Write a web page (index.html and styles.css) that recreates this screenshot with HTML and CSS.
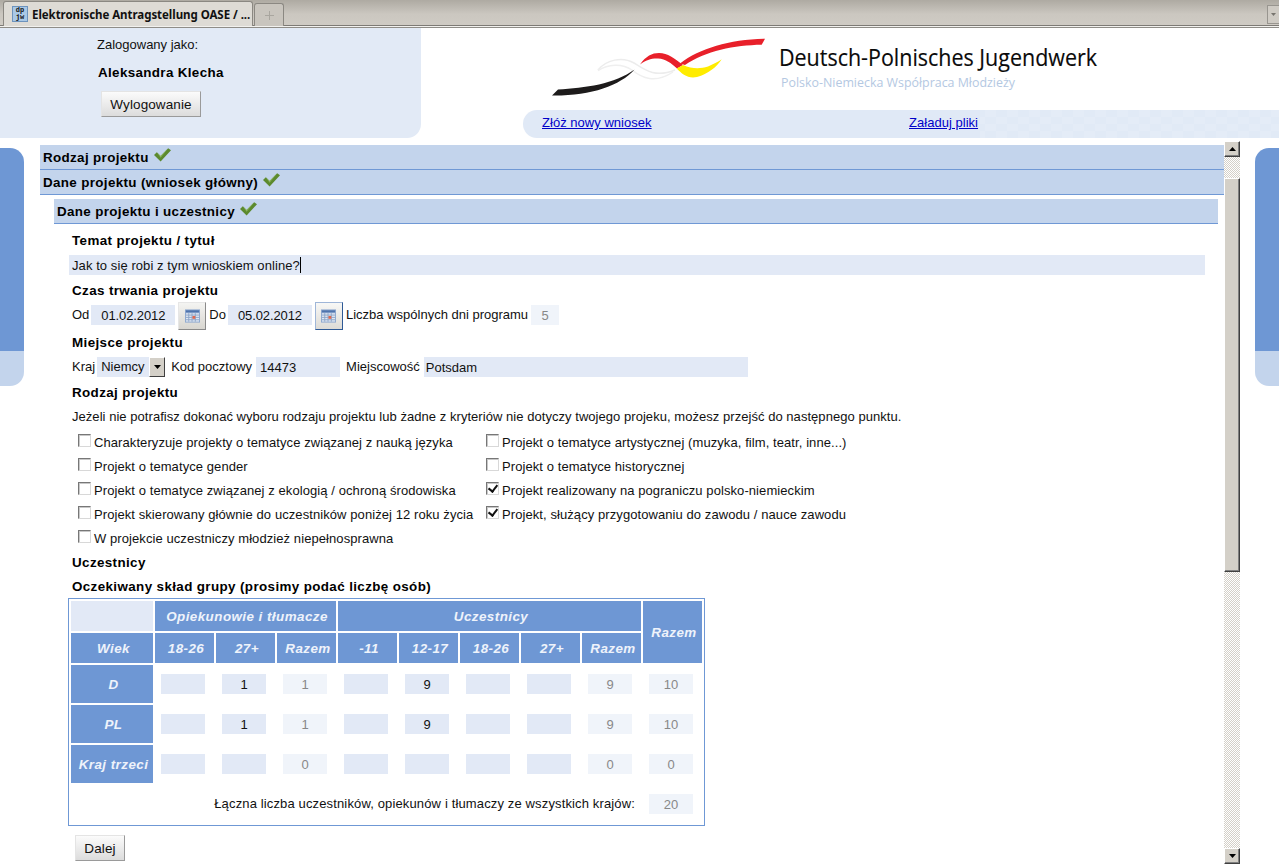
FILE: index.html
```html
<!DOCTYPE html>
<html lang="pl">
<head>
<meta charset="utf-8">
<title>Elektronische Antragstellung OASE</title>
<link rel="stylesheet" href="styles.css">
</head>
<body>
<div class="chrome">
  <div class="tab">
    <span class="favicon">dp<br>jw</span>
    <span class="tab-title">Elektronische Antragstellung OASE / ...</span>
  </div>
  <div class="tab-new">
    <svg width="9" height="9" viewBox="0 0 9 9"><path d="M4 0h1v4h4v1H5v4H4V5H0V4h4z" fill="#a9a69f"/></svg>
  </div>
  <div class="tab-menu">
    <svg width="5" height="3" viewBox="0 0 5 3"><path d="M0 0h5L2.500 3z" fill="#77746e"/></svg>
  </div>
</div>

<header class="top">
  <div class="user">
    <div class="user-label">Zalogowany jako:</div>
    <div class="user-name">Aleksandra Klecha</div>
    <button class="btn btn-logout">Wylogowanie</button>
  </div>
  <div class="brand">
    <svg class="logo" width="858" height="82" viewBox="421 28 858 82">
      <path d="M598 70C606 60 622 56 634 63C645 70 655 78 675 70" fill="none" stroke="#ececec" stroke-width="1.500"/>
      <path d="M598 70.500C608 64 622 63 632 70C642 78 655 84 673 72" fill="none" stroke="#efefef" stroke-width="1.500"/>
      <path d="M552 95.500L558 89.500C585 88 615 84 634.500 69.500C620 86 590 96 552 95.500Z" fill="#1d1b1b"/>
      <path d="M765 38.700L761.700 44.700C735 45 705 51 685 65L680 63.500C700 48 730 39.500 765 38.700Z" fill="#e8202a"/>
      <path d="M640 64.500C646 56 652 53 659 53C668 53 674 58 683 65L677 68.500C671 63 666 59 658 58.500C651 58.300 646 60 640 64.500Z" fill="#e8202a"/>
      <path d="M676.700 68.500L683 65C692 69 700 69 708 66.500C713 64.500 718 62 721.700 59.300C717 67 708 74 697 77C688 79 682 74 676.700 68.500Z" fill="#ffec00"/>
      <text class="logo-title" x="779" y="65.500" textLength="318" lengthAdjust="spacingAndGlyphs">Deutsch-Polnisches Jugendwerk</text>
      <text class="logo-sub" x="781" y="87" textLength="234" lengthAdjust="spacingAndGlyphs">Polsko-Niemiecka Współpraca Młodzieży</text>
    </svg>
    <nav class="nav">
      <a class="nav-link" href="#">Złóż nowy wniosek</a>
      <a class="nav-link" href="#">Załaduj pliki</a>
    </nav>
  </div>
</header>

<div class="main">
  <div class="side side-left"></div>
  <div class="viewport">
    <div class="page">
      <div class="bar"><b>Rodzaj projektu</b>
        <svg class="ok" width="17" height="15" viewBox="0 0 18 15"><path d="M0 8l3-3 4 4 8-8 3 2L7 15z" fill="#5c8a2e"/><path d="M3 5l4 4 8-8-8 10z" fill="#8ab45c"/></svg>
      </div>
      <div class="bar"><b>Dane projektu (wniosek główny)</b>
        <svg class="ok" width="17" height="15" viewBox="0 0 18 15"><path d="M0 8l3-3 4 4 8-8 3 2L7 15z" fill="#5c8a2e"/><path d="M3 5l4 4 8-8-8 10z" fill="#8ab45c"/></svg>
      </div>
      <div class="bar bar-sub"><b>Dane projektu i uczestnicy</b>
        <svg class="ok" width="17" height="15" viewBox="0 0 18 15"><path d="M0 8l3-3 4 4 8-8 3 2L7 15z" fill="#5c8a2e"/><path d="M3 5l4 4 8-8-8 10z" fill="#8ab45c"/></svg>
      </div>

      <form class="form">
        <div class="heading">Temat projektu / tytuł</div>
        <div class="row row-title"><div class="field field-title">Jak to się robi z tym wnioskiem online?<span class="caret"></span></div></div>

        <div class="heading">Czas trwania projektu</div>
        <div class="row row-dates">
          <span class="lbl">Od</span>
          <input class="field field-date" value="01.02.2012">
          <span class="cal"><svg width="15" height="14" viewBox="0 0 16 14"><rect width="16" height="14" fill="#8da7cf"/><rect x="1" y="1" width="14" height="2" fill="#4f74ad"/><path d="M1 4h14v9H1z" fill="#dfe7f3"/><path d="M1 6h14M1 8.500h14M1 11h14M4 4v9M7.500 4v9M11 4v9" stroke="#8ea5c8" stroke-width="1"/><rect x="8" y="7" width="3" height="3" fill="#e0684f"/></svg></span>
          <span class="lbl">Do</span>
          <input class="field field-date" value="05.02.2012">
          <span class="cal cal-hover"><svg width="15" height="14" viewBox="0 0 16 14"><rect width="16" height="14" fill="#8da7cf"/><rect x="1" y="1" width="14" height="2" fill="#4f74ad"/><path d="M1 4h14v9H1z" fill="#dfe7f3"/><path d="M1 6h14M1 8.500h14M1 11h14M4 4v9M7.500 4v9M11 4v9" stroke="#8ea5c8" stroke-width="1"/><rect x="8" y="7" width="3" height="3" fill="#e0684f"/></svg></span>
          <span class="lbl">Liczba wspólnych dni programu</span>
          <input class="field field-days field-off" value="5">
        </div>

        <div class="heading">Miejsce projektu</div>
        <div class="row row-place">
          <span class="lbl">Kraj</span>
          <div class="select"><span class="select-value">Niemcy</span><span class="select-arrow"><svg width="7" height="4" viewBox="0 0 7 4"><path d="M0 0h7L3.500 4z" fill="#000"/></svg></span></div>
          <span class="lbl lbl-kod">Kod pocztowy</span>
          <input class="field field-zip" value="14473">
          <span class="lbl lbl-city">Miejscowość</span>
          <input class="field field-city" value="Potsdam">
        </div>

        <div class="heading">Rodzaj projektu</div>
        <div class="line">Jeżeli nie potrafisz dokonać wyboru rodzaju projektu lub żadne z kryteriów nie dotyczy twojego projeku, możesz przejść do następnego punktu.</div>

        <div class="checks">
          <label class="check"><input type="checkbox" class="box">Charakteryzuje projekty o tematyce związanej z nauką języka</label>
          <label class="check"><input type="checkbox" class="box">Projekt o tematyce artystycznej (muzyka, film, teatr, inne...)</label>
          <label class="check"><input type="checkbox" class="box">Projekt o tematyce gender</label>
          <label class="check"><input type="checkbox" class="box">Projekt o tematyce historycznej</label>
          <label class="check"><input type="checkbox" class="box">Projekt o tematyce związanej z ekologią / ochroną środowiska</label>
          <label class="check"><input type="checkbox" class="box" checked>Projekt realizowany na pograniczu polsko-niemieckim</label>
          <label class="check"><input type="checkbox" class="box">Projekt skierowany głównie do uczestników poniżej 12 roku życia</label>
          <label class="check"><input type="checkbox" class="box" checked>Projekt, służący przygotowaniu do zawodu / nauce zawodu</label>
          <label class="check"><input type="checkbox" class="box">W projekcie uczestniczy młodzież niepełnosprawna</label>
        </div>

        <div class="heading">Uczestnicy</div>
        <div class="heading">Oczekiwany skład grupy (prosimy podać liczbę osób)</div>

        <table class="grid">
          <colgroup><col class="c-first"><col class="c"><col class="c"><col class="c"><col class="c"><col class="c"><col class="c"><col class="c"><col class="c"><col class="c"></colgroup>
          <tr class="r-head">
            <th class="blank"></th>
            <th colspan="3">Opiekunowie i tłumacze</th>
            <th colspan="5">Uczestnicy</th>
            <th rowspan="2">Razem</th>
          </tr>
          <tr class="r-head">
            <th>Wiek</th><th>18-26</th><th>27+</th><th>Razem</th><th>-11</th><th>12-17</th><th>18-26</th><th>27+</th><th>Razem</th>
          </tr>
          <tr class="r-body">
            <th>D</th>
            <td><input class="cell"></td><td><input class="cell" value="1"></td><td><input class="cell off" value="1"></td>
            <td><input class="cell"></td><td><input class="cell" value="9"></td><td><input class="cell"></td><td><input class="cell"></td><td><input class="cell off" value="9"></td><td><input class="cell off" value="10"></td>
          </tr>
          <tr class="r-body">
            <th>PL</th>
            <td><input class="cell"></td><td><input class="cell" value="1"></td><td><input class="cell off" value="1"></td>
            <td><input class="cell"></td><td><input class="cell" value="9"></td><td><input class="cell"></td><td><input class="cell"></td><td><input class="cell off" value="9"></td><td><input class="cell off" value="10"></td>
          </tr>
          <tr class="r-body">
            <th>Kraj trzeci</th>
            <td><input class="cell"></td><td><input class="cell"></td><td><input class="cell off" value="0"></td>
            <td><input class="cell"></td><td><input class="cell"></td><td><input class="cell"></td><td><input class="cell"></td><td><input class="cell off" value="0"></td><td><input class="cell off" value="0"></td>
          </tr>
          <tr class="r-body">
            <td colspan="9" class="total-label">Łączna liczba uczestników, opiekunów i tłumaczy ze wszystkich krajów:</td>
            <td><input class="cell off" value="20"></td>
          </tr>
        </table>

        <button type="button" class="btn btn-next">Dalej</button>
      </form>
    </div>
    <div class="scrollbar">
      <span class="sb-btn"><svg width="7" height="4" viewBox="0 0 7 4"><path d="M3.500 0L7 4H0z" fill="#000"/></svg></span>
      <span class="sb-track sb-track-top"></span>
      <span class="sb-thumb"></span>
      <span class="sb-track sb-track-bottom"></span>
      <span class="sb-btn"><svg width="7" height="4" viewBox="0 0 7 4"><path d="M0 0h7L3.500 4z" fill="#000"/></svg></span>
    </div>
  </div>
  <div class="side side-right"></div>
</div>
</body>
</html>
```

FILE: styles.css
```css
* { box-sizing: border-box; }
html, body { margin: 0; padding: 0; height: 100%; overflow: hidden; background: #fff; }
body { font: 13px/1.2 "Liberation Sans", Arial, sans-serif; color: #111; }

/* browser chrome */
.chrome {
  height: 28px; display: flex; align-items: flex-end; padding-left: 3px;
  background: linear-gradient(#aeaaa2 0, #cbc7c0 14px, #cfcbc4 25px, #7d7a75 25px, #7d7a75 26px, #f2f1ee 26px, #f2f1ee 27px, #8f8d88 27px);
}
.tab {
  width: 250px; height: 25px; margin-bottom: 2px; display: flex; align-items: center; padding-left: 8px; gap: 4px;
  background: #dedbd5; border: 1px solid #8b8882; border-bottom: 0; border-radius: 3px 3px 0 0;
}
.favicon {
  width: 16px; height: 16px; background: #a9c8e6; border: 1px solid #6d93bd; color: #111;
  font: bold 7px/7px "Liberation Mono", monospace; text-align: center; flex: none;
}
.tab-title { font: bold 11.5px "Noto Sans", sans-serif; color: #111; white-space: nowrap; letter-spacing: -.05px; }
.tab-new {
  width: 30px; height: 23px; margin: 0 0 2px 1px; display: flex; align-items: center; justify-content: center;
  background: #c9c5be; border: 1px solid #8b8882; border-bottom: 0; border-radius: 3px 3px 0 0;
}
.tab-menu {
  margin-left: auto; width: 12px; height: 19px; margin-bottom: 4px; display: flex; align-items: center; justify-content: center;
  background: #cfcbc4; border: 1px solid #98958f; border-right: 0;
}

/* header */
.top { height: 110px; display: flex; }
.user {
  width: 421px; flex: none; padding-left: 97px; background: #e2eaf6; border-radius: 0 0 14px 0;
}
.user-label { height: 32px; line-height: 34px; }
.user-name { height: 24px; line-height: 26px; padding-left: 1px; font-weight: bold; font-size: 13.4px; letter-spacing: .35px; color: #000; }
.btn {
  display: block; font: 13.5px "Liberation Sans", Arial, sans-serif; color: #111; height: 26px; padding: 0; letter-spacing: .1px;
  background: linear-gradient(#fbfbfb, #dcdcdc); border: 1px solid #e4e4e4; border-right-color: #9a9a9a; border-bottom-color: #9a9a9a;
}
.btn-logout { width: 100px; margin: 7px 0 0 4px; }
.btn-next { width: 50px; margin: 9px 0 0 6px; }
.brand { flex: 1; display: flex; flex-direction: column; min-width: 0; }
.logo { display: block; flex: none; }
.logo-title { font: 24px "Open Sans", sans-serif; fill: #0a0a0a; stroke: #0a0a0a; stroke-width: .15px; }
.logo-sub { font: 13.5px "Open Sans", sans-serif; fill: #b4c8e2; }
.nav {
  height: 28px; margin-left: 102px; padding: 0 0 2px 19px; display: flex; align-items: center; border-radius: 14px 0 0 14px;
  background:
    linear-gradient(90deg, #e0e9f6 457px, transparent 457px),
    conic-gradient(#e1eaf6 25%, #e4ecf7 0 50%, #e1eaf6 0 75%, #e4ecf7 0) 0 0 / 22px 14px;
}
.nav-link { color: #0000c8; text-decoration: underline; width: 367px; flex: none; letter-spacing: .03px; }

/* main */
.main { height: 726px; display: flex; }
.side { width: 24px; height: 238px; margin-top: 10px; flex: none; background: linear-gradient(#6e97d4 0, #6e97d4 203px, #c3d4ec 203px); }
.side-left { border-radius: 0 14px 14px 0; }
.side-right { border-radius: 14px 0 0 14px; margin-left: 15px; }
.viewport { width: 1200px; height: 723px; margin: 3px 0 0 16px; display: flex; flex: none; }
.page { width: 1184px; height: 723px; padding-top: 4px; overflow: hidden; flex: none; }

.bar {
  height: 25px; display: flex; align-items: center; padding: 3px 0 0 3px; gap: 5px;
  background: #c3d4ec; border-bottom: 1px solid #6f98d5; color: #000;
}
.bar b { font-size: 13.4px; letter-spacing: .35px; }
.ok { flex: none; margin-top: -9px; }
.bar-sub { margin: 4px 6px 0 14px; height: 25px; }

.form { padding: 4px 0 0 29px; }
.heading { height: 24px; line-height: 26px; padding-left: 3px; font-weight: bold; font-size: 13.4px; letter-spacing: .38px; color: #000; }
.line { height: 24px; line-height: 26px; padding-left: 3px; color: #111; letter-spacing: .045px; }
.row { display: flex; align-items: center; padding-left: 3px; }
.row-title { height: 26px; padding-left: 0; }
.row-dates { height: 28px; }
.row-place { height: 26px; }
.lbl { white-space: nowrap; }
.row-dates .lbl { padding-bottom: 2px; }

.field {
  height: 20px; border: 0; padding: 0 4px; background: #e2e9f6; color: #111; display: block; outline: 0;
  font: 13px "Liberation Sans", Arial, sans-serif; flex: none; border-radius: 0;
}
.field-title { width: 1136px; line-height: 22px; padding-left: 3px; letter-spacing: .08px; }
.caret { display: inline-block; width: 1px; height: 16px; background: #000; vertical-align: -3px; }
.field-date { width: 84px; text-align: center; margin: -2px 0 0 2px; letter-spacing: -.1px; }
.row-dates .lbl + .field-days { margin: -2px 0 0 3px; }
.field-days { width: 28px; text-align: center; }
.field-off { background: #f0f4fa; color: #888; }
.cal {
  width: 28px; height: 28px; margin: 0 3px; flex: none; display: flex; align-items: center; justify-content: center;
  background: linear-gradient(#f4f4f2, #d8d6d0); border: 1px solid #e6e6e6; border-right-color: #8a8a8a; border-bottom-color: #8a8a8a;
}
.cal-hover { border-color: #9fb6d8; border-right-color: #2f5a96; border-bottom-color: #2f5a96; background: linear-gradient(#f8f8f6, #dddbd6); }
.select { width: 68px; height: 20px; margin-left: 2px; display: flex; flex: none; background: #e2e9f6; }
.select-value { width: 52px; line-height: 20px; padding-left: 4px; }
.select-arrow {
  width: 16px; height: 20px; display: flex; align-items: center; justify-content: center;
  background: #d4d0c8; border: 1px solid #fff; border-right-color: #404040; border-bottom-color: #404040;
}
.lbl-kod { margin-left: 6px; }
.field-zip { width: 84px; margin-left: 4px; }
.lbl-city { margin-left: 6px; }
.field-city { width: 324px; margin-left: 4px; padding-left: 2px; }

.checks { display: grid; grid-template-columns: 408px 1fr; padding-left: 9px; margin-top: 2px; }
.check { height: 24px; padding-top: 2px; display: flex; align-items: center; gap: 3px; white-space: nowrap; color: #111; letter-spacing: .08px; }
.box {
  appearance: none; -webkit-appearance: none; width: 13px; height: 13px; margin: -6px 0 0; flex: none; position: relative;
  background: #fff; border: 1px solid #777; border-right-color: #d8d8d8; border-bottom-color: #d8d8d8; box-shadow: inset 1px 1px 0 #c8c8c8;
}
.box:checked::after {
  content: ""; position: absolute; left: 3px; top: 0; width: 4px; height: 7px;
  border: solid #111; border-width: 0 2px 2px 0; transform: rotate(38deg);
}

/* table */
.grid {
  border: 1px solid #6f98d5; border-collapse: separate; border-spacing: 2px; table-layout: fixed; width: 637px; margin-left: -1px;
}
.c-first { width: 82px; }
.c { width: 59px; }
.grid th {
  padding: 0 0 0 3px; background: #6e97d4; color: #eef3fb; font: italic bold 13.4px "Liberation Sans", Arial, sans-serif; letter-spacing: .45px; text-align: center;
}
.grid th.blank { background: #e2e9f6; }
.r-head { height: 30px; }
.r-body { height: 38px; }
.grid td { padding: 0; text-align: center; }
.cell {
  display: block; width: 44px; height: 20px; margin: 0 0 0 6px; border: 0; padding: 0; background: #e2e9f6; color: #111; text-align: center; outline: 0;
  font: 13px "Liberation Sans", Arial, sans-serif; border-radius: 0;
}
.cell.off { background: #f0f4fa; color: #888; }
.grid td.total-label { text-align: right; padding-right: 6px; color: #111; letter-spacing: .14px; }

/* scrollbar */
.scrollbar { width: 16px; height: 723px; display: flex; flex-direction: column; flex: none; }
.sb-btn, .sb-thumb {
  flex: none; width: 16px; background: #d4d0c8; border: 1px solid #fff; border-right-color: #404040; border-bottom-color: #404040; box-shadow: inset -1px -1px 0 #808080;
}
.sb-btn { height: 16px; display: flex; align-items: center; justify-content: center; }
.sb-thumb { height: 394px; }
.sb-track {
  display: block; flex: none; background-color: #fff;
  background-image: conic-gradient(#d4d0c8 25%, #fff 0 50%, #d4d0c8 0 75%, #fff 0); background-size: 2px 2px;
}
.sb-track-top { height: 21px; }
.sb-track-bottom { height: 276px; }
```
